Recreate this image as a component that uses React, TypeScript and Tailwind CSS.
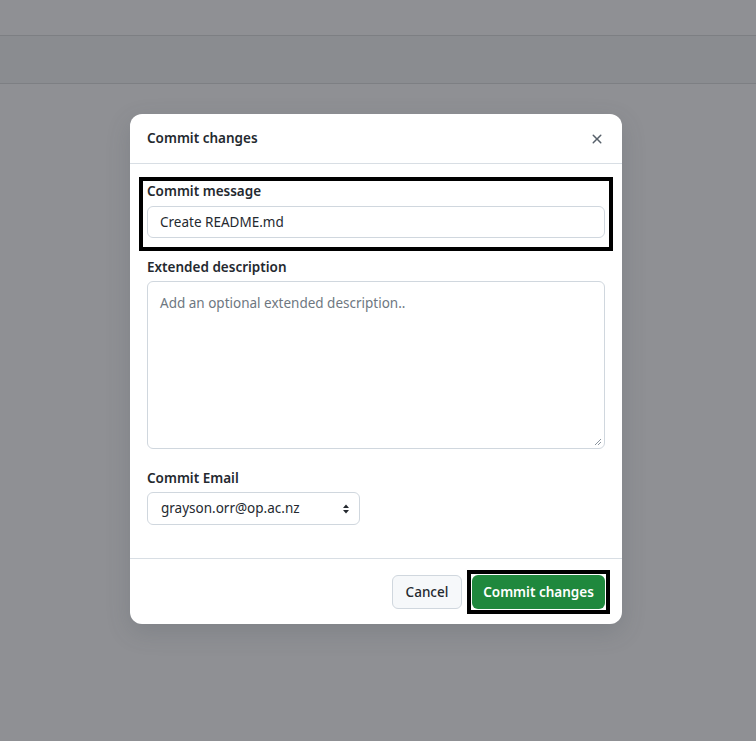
import React from "react";

const font = { fontFamily: '"Noto Sans", "Liberation Sans", sans-serif' };

function CloseIcon() {
  return (
    <svg width="16" height="16" viewBox="0 0 16 16" fill="currentColor" aria-hidden="true">
      <path d="M3.72 3.72a.75.75 0 0 1 1.06 0L8 6.94l3.22-3.22a.749.749 0 0 1 1.275.326.749.749 0 0 1-.215.734L9.06 8l3.22 3.22a.749.749 0 0 1-.326 1.275.749.749 0 0 1-.734-.215L8 9.06l-3.22 3.22a.751.751 0 0 1-1.042-.018.751.751 0 0 1-.018-1.042L6.94 8 3.72 4.78a.75.75 0 0 1 0-1.06Z" />
    </svg>
  );
}

function SelectArrows() {
  return (
    <svg width="8" height="12" viewBox="0 0 8 12" fill="#24292f" aria-hidden="true">
      <path d="M4 1.5 7 5H1Z" />
      <path d="M4 10.5 1 7h6Z" />
    </svg>
  );
}

export default function App() {
  return (
    <div className="min-h-[741px] bg-[#8f9094] text-[13.5px] text-[#24292f]" style={font}>
      <div className="h-[35px]" />
      <div className="h-[49px] border-y border-[#7d7f83] bg-[#8a8c90]" />
      <div className="pt-[30px]">
        <div className="ml-[130px] w-[492px] overflow-hidden rounded-[12px] bg-white shadow-[0_8px_24px_rgba(66,74,83,0.2)]">
          {/* header */}
          <div className="flex h-[50px] items-center justify-between border-b border-[#d8dee4] pl-[17px] pr-[17px]">
            <h2 className="text-[13.5px] font-semibold">Commit changes</h2>
            <button type="button" className="text-[#57606a]" aria-label="Close">
              <CloseIcon />
            </button>
          </div>

          {/* body */}
          <div className="px-[9px] pb-[33px] pt-[13px]">
            <div className="border-4 border-black px-[4px] pb-[9px]">
              <label className="block h-[20px] leading-[20px] font-semibold">Commit message</label>
              <div className="mt-[5px] flex h-[32px] items-center rounded-[6px] border border-[#d0d7de] px-[12px]">
                Create README.md
              </div>
            </div>

            <div className="px-[8px]">
              <label className="mt-[6px] block h-[20px] leading-[20px] font-semibold">Extended description</label>
              <div className="relative mt-[4px] h-[168px] rounded-[6px] border border-[#d0d7de] px-[12px] pt-[11px] text-[#6e7781]">
                Add an optional extended description..
                <svg className="absolute bottom-[2px] right-[2px]" width="8" height="8" viewBox="0 0 8 8" stroke="#8c959f" strokeWidth="1">
                  <path d="M7 1 1 7M7 4 4 7" />
                </svg>
              </div>

              <label className="mt-[19px] block h-[20px] leading-[20px] font-semibold">Commit Email</label>
              <div className="mt-[4px] flex h-[33px] w-[213px] items-center justify-between rounded-[6px] border border-[#d0d7de] pl-[13px] pr-[9px]">
                <span>grayson.orr@op.ac.nz</span>
                <SelectArrows />
              </div>
            </div>
          </div>

          {/* footer */}
          <div className="flex items-center justify-end gap-[5px] border-t border-[#d8dee4] pb-[10px] pr-[12px] pt-[11px]">
            <button
              type="button"
              className="h-[34px] w-[70px] rounded-[6px] border border-[#d0d7de] bg-[#f6f8fa] font-medium"
            >
              Cancel
            </button>
            <div className="border-4 border-black p-px">
              <button
                type="button"
                className="h-[34px] w-[133px] rounded-[6px] bg-[#1f883d] font-semibold text-white"
              >
                Commit changes
              </button>
            </div>
          </div>
        </div>
      </div>
    </div>
  );
}
